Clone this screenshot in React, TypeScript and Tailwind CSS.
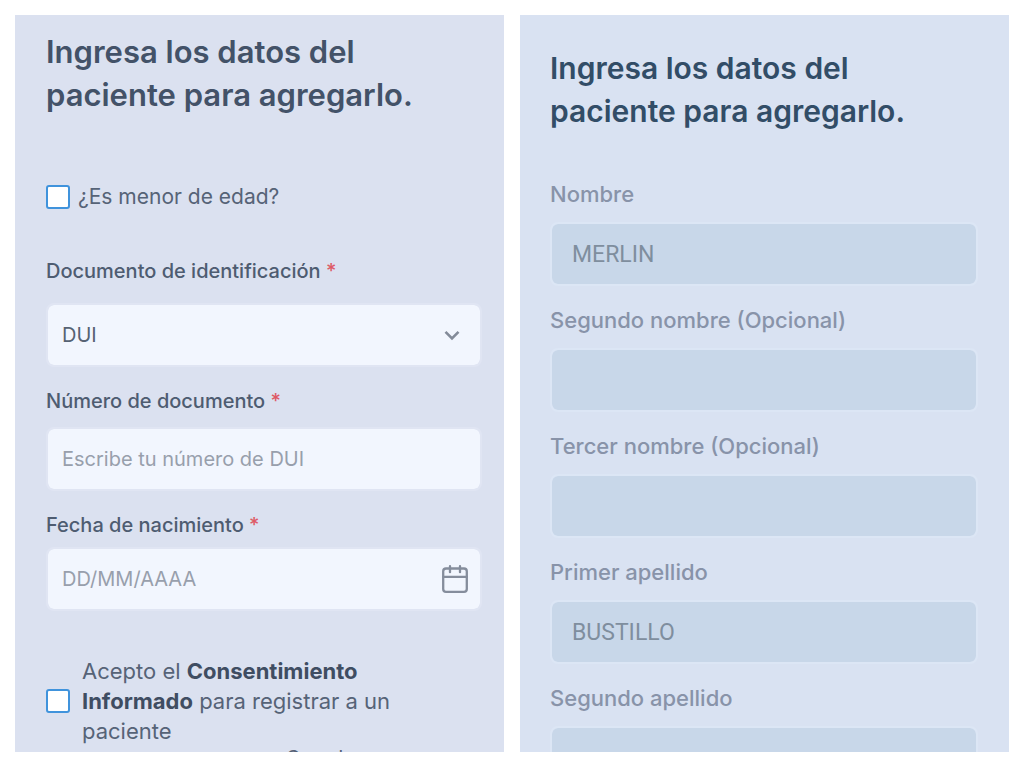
const patientFields = [
  { id: "nombre", label: "Nombre", value: "MERLIN" },
  { id: "segundo-nombre", label: "Segundo nombre (Opcional)", value: "" },
  { id: "tercer-nombre", label: "Tercer nombre (Opcional)", value: "" },
  { id: "primer-apellido", label: "Primer apellido", value: "BUSTILLO" },
  { id: "segundo-apellido", label: "Segundo apellido", value: "" },
];

const inputClass =
  "block h-16 w-full appearance-none rounded-lg border-2 border-[#e0e5f3] bg-[#f2f6fe] bg-clip-padding px-3.5 text-xl text-[#566273] placeholder:text-[#989fac] outline-none";

const checkboxClass =
  "size-6 shrink-0 appearance-none rounded-[3px] border-2 border-[#4093dc] bg-white checked:bg-[#4093dc]";

function RequiredLabel({ htmlFor, text }: { htmlFor: string; text: string }) {
  return (
    <label htmlFor={htmlFor} className="block text-xl leading-7 font-medium text-[#4e5c71]">
      {text} <span className="text-[#de5a66]">*</span>
    </label>
  );
}

function ChevronIcon() {
  return (
    <svg className="pointer-events-none absolute top-1/2 right-5 size-5 -translate-y-1/2" viewBox="0 0 20 20" fill="none" stroke="#838b99" strokeWidth="2.6" aria-hidden="true">
      <path d="M3.5 6.8 10 13.4l6.5-6.6" />
    </svg>
  );
}

function CalendarIcon() {
  return (
    <svg className="h-7 w-[26px]" viewBox="0 0 26 28" fill="none" stroke="#858d9c" strokeWidth="2.3" strokeLinecap="round" aria-hidden="true">
      <rect x="1.2" y="3.5" width="23.6" height="23.3" rx="2.8" />
      <path d="M1.2 11.8h23.6M8 1.2v6M18 1.2v6" />
    </svg>
  );
}

function DocumentForm() {
  return (
    <form className="overflow-hidden bg-[#dbe1f0] pt-[15px] pr-[22px] pl-[31px]">
      <h1 className="text-[31px] leading-[43px] font-semibold text-[#435268]">
        Ingresa los datos del
        <br />
        paciente para agregarlo.
      </h1>

      <div className="mt-[69px] flex items-center gap-2">
        <input id="menor" type="checkbox" className={checkboxClass} />
        <label htmlFor="menor" className="text-[21px] leading-6 text-[#566377]">¿Es menor de edad?</label>
      </div>

      <div className="mt-12">
        <RequiredLabel htmlFor="tipo-documento" text="Documento de identificación" />
        <div className="relative mt-[18px]">
          <select id="tipo-documento" className={inputClass} defaultValue="DUI">
            <option>DUI</option>
            <option>Pasaporte</option>
          </select>
          <ChevronIcon />
        </div>
      </div>

      <div className="mt-5">
        <RequiredLabel htmlFor="numero" text="Número de documento" />
        <div className="mt-3">
          <input id="numero" type="text" className={inputClass} placeholder="Escribe tu número de DUI" />
        </div>
      </div>

      <div className="mt-5">
        <RequiredLabel htmlFor="fecha" text="Fecha de nacimiento" />
        <div className="relative mt-2">
          <input id="fecha" type="text" className={inputClass} placeholder="DD/MM/AAAA" />
          <button type="button" aria-label="Abrir calendario" className="absolute top-1/2 right-3.5 -translate-y-1/2">
            <CalendarIcon />
          </button>
        </div>
      </div>

      <div className="mt-[45px] flex items-center gap-3">
        <input id="consentimiento" type="checkbox" className={checkboxClass} />
        <label htmlFor="consentimiento" className="text-[22px] leading-[30px] text-[#566377]">
          Acepto el <strong className="font-bold text-[#3f4d62]">Consentimiento</strong>
          <br />
          <strong className="font-bold text-[#3f4d62]">Informado</strong> para registrar a un
          <br />
          paciente
        </label>
      </div>

      <div className="flex justify-end pr-[120px]">
        <button type="submit" className="text-xl leading-6 text-[#566377]">Guardar</button>
      </div>
    </form>
  );
}

function PatientForm() {
  return (
    <form className="overflow-hidden bg-[#d9e2f2] pt-8 pr-[31px] pl-[30px]">
      <h2 className="text-[30px] leading-[43px] font-semibold text-[#324d67]">
        Ingresa los datos del
        <br />
        paciente para agregarlo.
      </h2>

      <div className="mt-[47px] flex flex-col gap-5">
        {patientFields.map((field) => (
          <div key={field.id}>
            <label htmlFor={field.id} className="block text-[22px] leading-7 font-medium text-[#8893a9]">{field.label}</label>
            <input
              id={field.id}
              type="text"
              disabled
              defaultValue={field.value}
              className="mt-3.5 block h-16 w-full rounded-lg border-2 border-[#dce6f5] bg-[#c8d7e9] bg-clip-padding px-5 font-[Roboto,sans-serif] text-[23px] text-[#7f8e9e]"
            />
          </div>
        ))}
      </div>
    </form>
  );
}

export default function App() {
  return (
    <main className="grid h-screen grid-cols-2 gap-4 bg-white p-[15px] pb-4 font-[Inter,sans-serif]">
      <DocumentForm />
      <PatientForm />
    </main>
  );
}
